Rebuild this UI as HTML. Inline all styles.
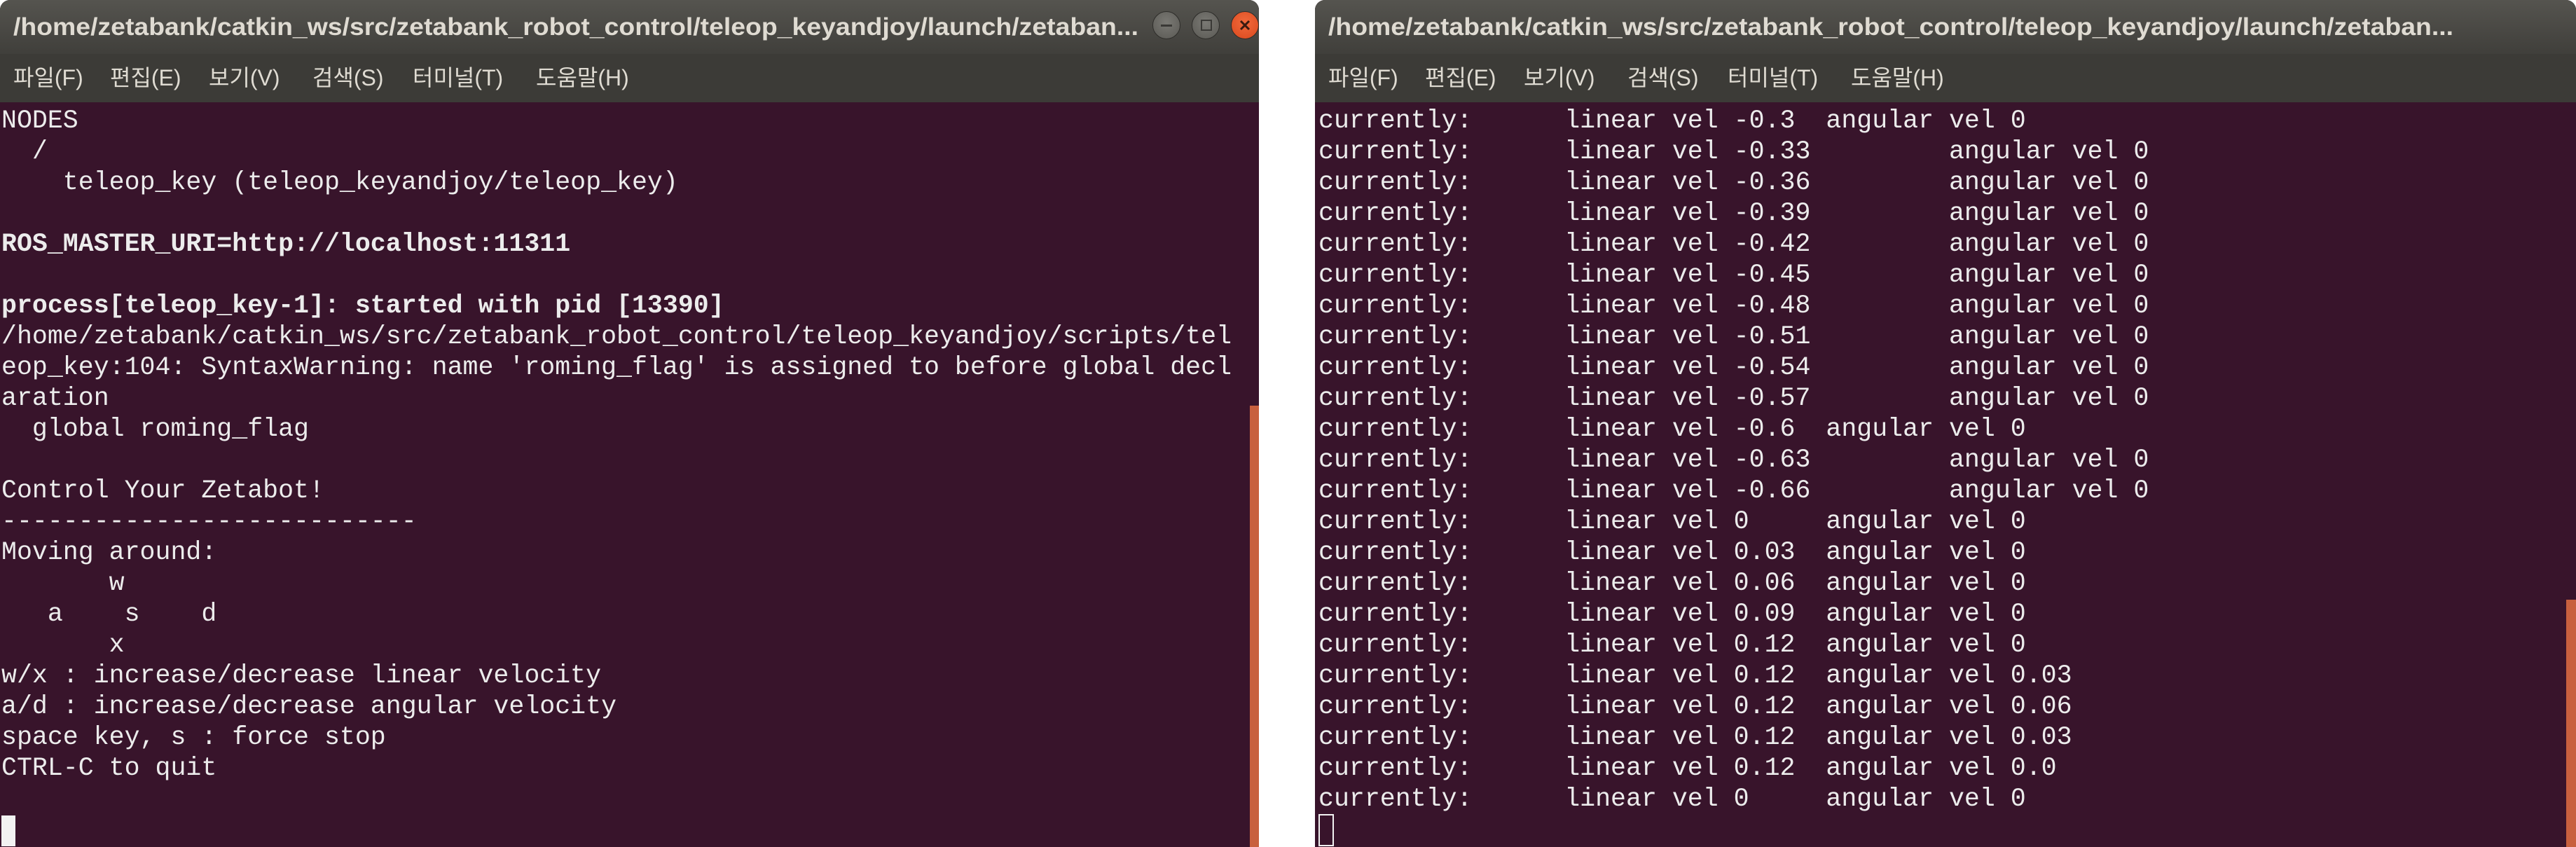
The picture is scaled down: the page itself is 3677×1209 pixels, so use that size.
<!DOCTYPE html>
<html><head><meta charset="utf-8"><style>
html,body{margin:0;padding:0;background:#fff;width:3677px;height:1209px;overflow:hidden;position:relative}
.win{position:absolute;top:0;height:1209px;background:#38142b;border-radius:14px 14px 0 0;overflow:hidden}
.tb{position:absolute;left:0;right:0;top:0;height:77px;background:linear-gradient(#55544f,#403f3b)}
.mb{position:absolute;left:0;right:0;top:77px;height:69px;background:#3c3b37}
svg.t{position:absolute;left:0;top:0}
pre{position:absolute;margin:0;top:151px;font-family:"Liberation Mono","DejaVu Sans Mono",monospace;font-size:36.6px;line-height:44px;color:#ececec;white-space:pre}
b{font-weight:bold}
.btn{position:absolute;top:16px;width:40px;height:40px;border-radius:50%;background:radial-gradient(circle at 50% 40%,#7a7974,#5a5954);border:1px solid #2e2d2a;box-sizing:border-box}
.sb{position:absolute;background:#c8603e}
</style></head><body>

<div class="win" style="left:0;width:1797px">
 <div class="tb"></div><div class="mb"></div>
 <svg class="t" width="1797" height="146">
  <text x="19" y="50" font-family="Liberation Sans, sans-serif" font-weight="bold" font-size="35" fill="#dfdbd2" textLength="1606" lengthAdjust="spacingAndGlyphs">/home/zetabank/catkin_ws/src/zetabank_robot_control/teleop_keyandjoy/launch/zetaban...</text>
  <g font-family="Liberation Sans, Noto Sans CJK KR, sans-serif" font-size="32" fill="#dfdbd2">
   <text x="19" y="122">파일(F)</text><text x="157" y="122">편집(E)</text><text x="298" y="122">보기(V)</text><text x="446" y="122">검색(S)</text><text x="589" y="122">터미널(T)</text><text x="765" y="122">도움말(H)</text>
  </g>
 </svg>
 <div class="btn" style="left:1645px"><div style="position:absolute;left:11px;top:18px;width:16px;height:3px;background:#3a3936"></div></div>
 <div class="btn" style="left:1701px"><div style="position:absolute;left:12px;top:11px;width:12px;height:12px;border:2px solid #3a3936"></div></div>
 <div class="btn" style="left:1757px;background:radial-gradient(circle at 50% 40%,#f26a3c,#d9481d)"><svg width="40" height="40" style="position:absolute;left:-1px;top:-1px"><path d="M14 14L26 26M26 14L14 26" stroke="#3a1a10" stroke-width="3"/></svg></div>
<pre style="left:2px">NODES
  /
    teleop_key (teleop_keyandjoy/teleop_key)

<b>ROS_MASTER_URI=http://localhost:11311</b>

<b>process[teleop_key-1]: started with pid [13390]</b>
/home/zetabank/catkin_ws/src/zetabank_robot_control/teleop_keyandjoy/scripts/tel
eop_key:104: SyntaxWarning: name 'roming_flag' is assigned to before global decl
aration
  global roming_flag

Control Your Zetabot!
---------------------------
Moving around:
       w
   a    s    d
       x
w/x : increase/decrease linear velocity
a/d : increase/decrease angular velocity
space key, s : force stop
CTRL-C to quit
</pre>
 <div style="position:absolute;left:2px;top:1164px;width:20px;height:44px;background:#f2f2f2"></div>
 <div class="sb" style="left:1784px;top:579px;width:13px;height:630px"></div>
</div>

<div class="win" style="left:1877px;width:1800px">
 <div class="tb"></div><div class="mb"></div>
 <svg class="t" width="1800" height="146">
  <text x="19" y="50" font-family="Liberation Sans, sans-serif" font-weight="bold" font-size="35" fill="#dfdbd2" textLength="1606" lengthAdjust="spacingAndGlyphs">/home/zetabank/catkin_ws/src/zetabank_robot_control/teleop_keyandjoy/launch/zetaban...</text>
  <g font-family="Liberation Sans, Noto Sans CJK KR, sans-serif" font-size="32" fill="#dfdbd2">
   <text x="19" y="122">파일(F)</text><text x="157" y="122">편집(E)</text><text x="298" y="122">보기(V)</text><text x="446" y="122">검색(S)</text><text x="589" y="122">터미널(T)</text><text x="765" y="122">도움말(H)</text>
  </g>
 </svg>
<pre style="left:5px">currently:      linear vel -0.3  angular vel 0
currently:      linear vel -0.33         angular vel 0
currently:      linear vel -0.36         angular vel 0
currently:      linear vel -0.39         angular vel 0
currently:      linear vel -0.42         angular vel 0
currently:      linear vel -0.45         angular vel 0
currently:      linear vel -0.48         angular vel 0
currently:      linear vel -0.51         angular vel 0
currently:      linear vel -0.54         angular vel 0
currently:      linear vel -0.57         angular vel 0
currently:      linear vel -0.6  angular vel 0
currently:      linear vel -0.63         angular vel 0
currently:      linear vel -0.66         angular vel 0
currently:      linear vel 0     angular vel 0
currently:      linear vel 0.03  angular vel 0
currently:      linear vel 0.06  angular vel 0
currently:      linear vel 0.09  angular vel 0
currently:      linear vel 0.12  angular vel 0
currently:      linear vel 0.12  angular vel 0.03
currently:      linear vel 0.12  angular vel 0.06
currently:      linear vel 0.12  angular vel 0.03
currently:      linear vel 0.12  angular vel 0.0
currently:      linear vel 0     angular vel 0
</pre>
 <div style="position:absolute;left:5px;top:1162px;width:22px;height:46px;border:2px solid #f2f2f2;box-sizing:border-box"></div>
 <div class="sb" style="left:1786px;top:856px;width:14px;height:353px"></div>
</div>
</body></html>
